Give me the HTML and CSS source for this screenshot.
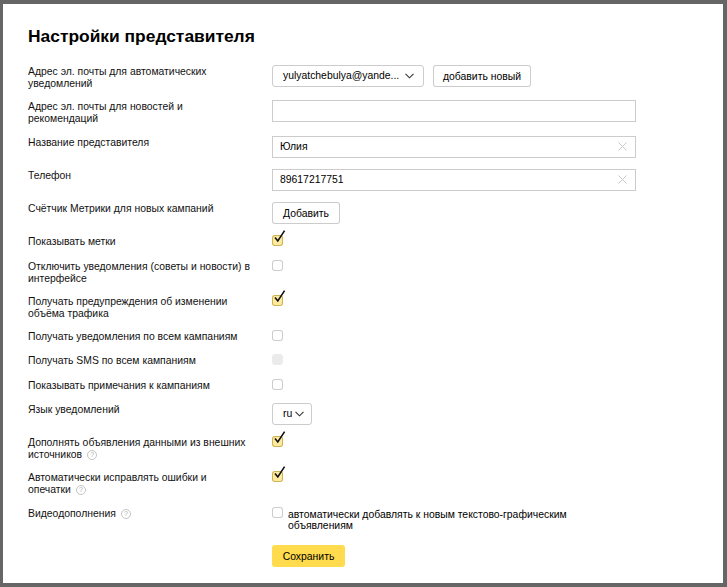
FILE: index.html
```html
<!DOCTYPE html>
<html lang="ru">
<head>
<meta charset="utf-8">
<title>Настройки представителя</title>
<link rel="stylesheet" href="styles.css">
</head>
<body>
<div class="frame">
  <h1 class="title">Настройки представителя</h1>
  <div class="form">
    <div class="label">Адрес эл. почты для автоматических уведомлений</div>
    <div class="ctrl">
      <div class="select select-email">
        <span class="select-text">yulyatchebulya@yande...</span>
        <svg class="chev" width="9" height="6" viewBox="0 0 9 6"><path d="M0.5 0.8 L4.5 4.8 L8.5 0.8" fill="none" stroke="#333" stroke-width="1.1"/></svg>
      </div>
      <button class="btn btn-add-new">добавить новый</button>
    </div>

    <div class="label">Адрес эл. почты для новостей и рекомендаций</div>
    <div class="ctrl"><div class="input"></div></div>

    <div class="label">Название представителя</div>
    <div class="ctrl"><div class="input"><span class="input-text">Юлия</span>
      <svg class="clear" width="9" height="9" viewBox="0 0 9 9"><path d="M0.5 0.5 L8.5 8.5 M8.5 0.5 L0.5 8.5" stroke="#c8c8c8" stroke-width="1"/></svg></div></div>

    <div class="label">Телефон</div>
    <div class="ctrl"><div class="input"><span class="input-text">89617217751</span>
      <svg class="clear" width="9" height="9" viewBox="0 0 9 9"><path d="M0.5 0.5 L8.5 8.5 M8.5 0.5 L0.5 8.5" stroke="#c8c8c8" stroke-width="1"/></svg></div></div>

    <div class="label">Счётчик Метрики для новых кампаний</div>
    <div class="ctrl"><button class="btn btn-add">Добавить</button></div>

    <div class="label single">Показывать метки</div>
    <div class="ctrl single"><span class="cb checked"><svg class="tick" width="14" height="15" viewBox="0 0 14 15"><path d="M3 7.5 L5.8 11 L12.6 0.6" fill="none" stroke="#111" stroke-width="1.6"/></svg></span></div>

    <div class="label">Отключить уведомления (советы и новости) в интерфейсе</div>
    <div class="ctrl"><span class="cb"></span></div>

    <div class="label">Получать предупреждения об изменении объёма трафика</div>
    <div class="ctrl"><span class="cb checked"><svg class="tick" width="14" height="15" viewBox="0 0 14 15"><path d="M3 7.5 L5.8 11 L12.6 0.6" fill="none" stroke="#111" stroke-width="1.6"/></svg></span></div>

    <div class="label single">Получать уведомления по всем кампаниям</div>
    <div class="ctrl single"><span class="cb"></span></div>

    <div class="label single">Получать SMS по всем кампаниям</div>
    <div class="ctrl single"><span class="cb disabled"></span></div>

    <div class="label single">Показывать примечания к кампаниям</div>
    <div class="ctrl single"><span class="cb"></span></div>

    <div class="label">Язык уведомлений</div>
    <div class="ctrl">
      <div class="select select-lang">
        <span class="select-text">ru</span>
        <svg class="chev" width="9" height="6" viewBox="0 0 9 6"><path d="M0.5 0.8 L4.5 4.8 L8.5 0.8" fill="none" stroke="#333" stroke-width="1.1"/></svg>
      </div>
    </div>

    <div class="label">Дополнять объявления данными из внешних источников<span class="help" title="Подробнее"></span></div>
    <div class="ctrl"><span class="cb checked"><svg class="tick" width="14" height="15" viewBox="0 0 14 15"><path d="M3 7.5 L5.8 11 L12.6 0.6" fill="none" stroke="#111" stroke-width="1.6"/></svg></span></div>

    <div class="label">Автоматически исправлять ошибки и опечатки<span class="help" title="Подробнее"></span></div>
    <div class="ctrl"><span class="cb checked"><svg class="tick" width="14" height="15" viewBox="0 0 14 15"><path d="M3 7.5 L5.8 11 L12.6 0.6" fill="none" stroke="#111" stroke-width="1.6"/></svg></span></div>

    <div class="label">Видеодополнения<span class="help" title="Подробнее"></span></div>
    <div class="ctrl">
      <label class="cb-line"><span class="cb"></span><span class="cb-text">автоматически добавлять к новым текстово-графическим объявлениям</span></label>
    </div>

    <div class="label"></div>
    <div class="ctrl save-cell"><button class="btn-save">Сохранить</button></div>
  </div>
</div>
</body>
</html>
```
FILE: styles.css
```css
* { box-sizing: border-box; }
html, body { margin: 0; padding: 0; background: #fff; }
body {
  font-family: "Liberation Sans", Arial, sans-serif;
  color: #000;
  font-size: 10.4px;
}
.frame {
  width: 727px;
  height: 587px;
  border-style: solid;
  border-color: #666;
  border-width: 4px 4px 4px 3px;
  padding: 0 0 0 25px;
  background: #fff;
}
.title {
  margin: 21px 0 0 0;
  font-size: 17.4px;
  line-height: 22px;
  font-weight: bold;
  color: #000;
}
.form {
  margin-top: 18px;
  display: grid;
  grid-template-columns: 244px 1fr;
  row-gap: 11.25px;
}
.label {
  width: 223px;
  line-height: 12px;
  font-size: 10.4px;
  color: #111;
  padding-top: 1px;
  margin-bottom: -1px;
}
.single { min-height: 13px; }
.ctrl {
  display: flex;
  align-items: flex-start;
  gap: 9px;
}
.select {
  height: 22px;
  border: 1px solid rgba(0,0,0,0.2);
  border-radius: 3px;
  display: flex;
  align-items: center;
  justify-content: space-between;
  padding: 0 9px 0 10px;
}
.select-email { width: 152px; }
.select-lang { width: 40px; padding: 0 7px 0 10px; }
.select-text { line-height: 20px; }
.chev { display: block; }
.btn {
  height: 22px;
  border: 1px solid rgba(0,0,0,0.2);
  border-radius: 3px;
  background: #fff;
  font-family: inherit;
  font-size: 10.4px;
  color: #000;
  padding: 0;
  margin: 0;
}
.btn-add-new { width: 98px; }
.btn-add { width: 68px; }
.input {
  width: 364px;
  height: 22px;
  border: 1px solid rgba(0,0,0,0.2);
  display: flex;
  align-items: center;
  justify-content: space-between;
  padding: 0 8px 0 7px;
}
.input-text { line-height: 20px; }
.cb {
  position: relative;
  display: inline-block;
  width: 11px;
  height: 11px;
  border: 1px solid rgba(0,0,0,0.2);
  border-radius: 3px;
  background: #fff;
  flex: none;
}
.cb.checked {
  background: #ffeba0;
  border-color: rgba(153,122,0,0.5);
}
.cb.disabled {
  background: #ebebeb;
  border-color: #ebebeb;
}
.tick {
  position: absolute;
  left: -1px;
  top: -6px;
}
.help {
  display: inline-block;
  width: 10px;
  height: 10px;
  border: 1px solid #c4c4c4;
  border-radius: 50%;
  vertical-align: top;
  margin-top: 1px;
  margin-left: 5px;
  text-align: center;
}
.help::after {
  content: "?";
  display: block;
  color: #b0b0b0;
  font-size: 7px;
  line-height: 8px;
}
.cb-line {
  display: flex;
  align-items: flex-start;
  gap: 5px;
}
.cb-text {
  width: 300px;
  line-height: 11px;
  margin-top: 2px;
}
.save-cell { margin-top: 3.5px; }
.btn-save {
  width: 73px;
  height: 22px;
  border: none;
  border-radius: 3px;
  background: #ffdb4d;
  font-family: inherit;
  font-size: 10.4px;
  color: #000;
  padding: 0;
}
```
